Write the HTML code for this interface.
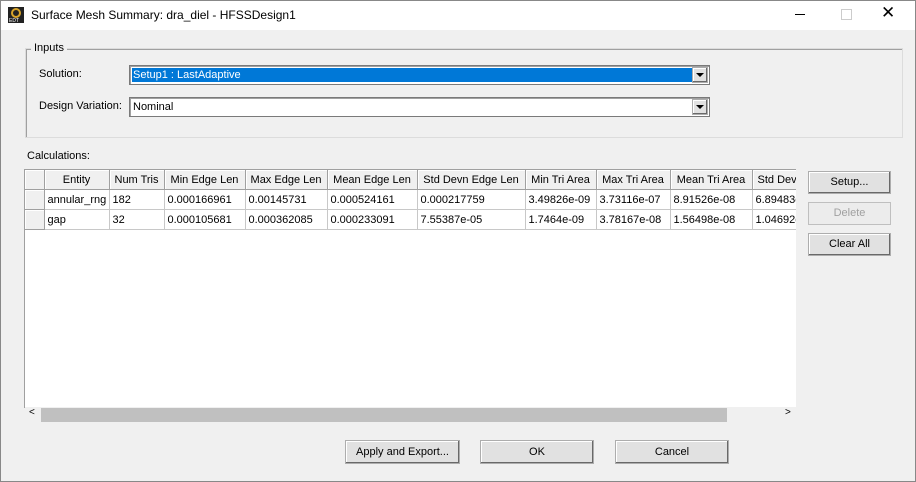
<!DOCTYPE html><html><head><style>
body{margin:0;width:916px;height:482px;background:#f0f0f0;font-family:"Liberation Sans",sans-serif;font-size:11px;color:#000;position:relative;overflow:hidden}
.a{position:absolute}
.win{left:0;top:0;width:914px;height:480px;border:1px solid #888}
.title{left:1px;top:1px;width:914px;height:29px;background:#fff}
.combo{background:#fff;border:1px solid #7a7a7a;box-shadow:inset 1px 1px 0 #a0a0a0}
.btn{background:#e1e1e1;border:1px solid #adadad;box-shadow:inset -1px -1px 0 #696969,inset 1px 1px 0 #fff;text-align:center;line-height:21px}
table{border-collapse:collapse;table-layout:fixed}
td{height:19px;border:1px solid #c8c8c8;padding:0 0 0 3px;white-space:nowrap;overflow:hidden;font-size:11px}
th{height:19px;font-weight:normal;background:#f0f0f0;border-right:1px solid #a0a0a0;border-bottom:1px solid #a0a0a0;box-shadow:inset 1px 1px 0 #fff;white-space:nowrap;overflow:hidden;padding:0;font-size:11px}
.arrow{width:0;height:0;border-left:4px solid transparent;border-right:4px solid transparent;border-top:4px solid #000}
</style></head><body>
<div class="a win"></div>
<div class="a title"></div>
<svg class="a" style="left:8px;top:7px" width="16" height="16"><rect width="16" height="16" fill="#222"/><circle cx="8" cy="6" r="4" fill="none" stroke="#d9a52b" stroke-width="2"/><text x="1" y="15" font-size="5" fill="#fff" font-family="Liberation Sans">EDT</text></svg>
<div class="a" style="left:31px;top:8px;font-size:12px">Surface Mesh Summary: dra_diel - HFSSDesign1</div>
<div class="a" style="left:795px;top:14px;width:10px;height:1px;background:#000"></div>
<div class="a" style="left:841px;top:9px;width:9px;height:9px;border:1px solid #ccc"></div>
<div class="a" style="left:881px;top:3px;font-size:17px">✕</div>
<div class="a" style="left:25px;top:48px;width:876px;height:88px;border:1px solid #dcdcdc;box-shadow:inset 1px 1px 0 #a0a0a0"></div>
<div class="a" style="left:31px;top:42px;background:#f0f0f0;padding:0 3px">Inputs</div>
<div class="a" style="left:39px;top:68px">Solution:</div>
<div class="a" style="left:39px;top:100px">Design Variation:</div>
<div class="a combo" style="left:129px;top:65px;width:579px;height:18px"><div class="a" style="left:2px;top:2px;width:559px;height:14px;background:#0078d7;color:#fff;line-height:14px;padding-left:1px">Setup1 : LastAdaptive</div><div class="a btn" style="right:1px;top:1px;width:14px;height:14px;line-height:14px"><div class="arrow" style="margin:5px auto"></div></div></div>
<div class="a combo" style="left:129px;top:97px;width:579px;height:18px"><div class="a" style="left:3px;top:3px">Nominal</div><div class="a btn" style="right:1px;top:1px;width:14px;height:14px;line-height:14px"><div class="arrow" style="margin:5px auto"></div></div></div>
<div class="a" style="left:27px;top:150px">Calculations:</div>
<div class="a" style="left:24px;top:169px;width:771px;height:238px;background:#fff;border-left:1px solid #a0a0a0;border-top:1px solid #a0a0a0;overflow:hidden">
<table style="width:830px"><colgroup><col style="width:19px"><col style="width:65px"><col style="width:55px"><col style="width:81px"><col style="width:82px"><col style="width:90px"><col style="width:108px"><col style="width:71px"><col style="width:74px"><col style="width:82px"><col style="width:103px"></colgroup>
<tr><th></th><th>Entity</th><th>Num Tris</th><th>Min Edge Len</th><th>Max Edge Len</th><th>Mean Edge Len</th><th>Std Devn Edge Len</th><th>Min Tri Area</th><th>Max Tri Area</th><th>Mean Tri Area</th><th style="text-align:left;padding-left:5px">Std Devn Tri Area</th></tr>
<tr><th></th><td>annular_rng</td><td>182</td><td>0.000166961</td><td>0.00145731</td><td>0.000524161</td><td>0.000217759</td><td>3.49826e-09</td><td>3.73116e-07</td><td>8.91526e-08</td><td>6.89483e-08</td></tr>
<tr><th></th><td>gap</td><td>32</td><td>0.000105681</td><td>0.000362085</td><td>0.000233091</td><td>7.55387e-05</td><td>1.7464e-09</td><td>3.78167e-08</td><td>1.56498e-08</td><td>1.04692e-08</td></tr>
</table></div>
<div class="a" style="left:25px;top:407px;width:771px;height:16px;background:#f0f0f0"></div>
<div class="a" style="left:41px;top:408px;width:686px;height:14px;background:#c0c0c0"></div>
<div class="a" style="left:29px;top:407px;font-size:10px">&lt;</div>
<div class="a" style="left:785px;top:407px;font-size:10px">&gt;</div>
<div class="a btn" style="left:808px;top:171px;width:81px;height:21px">Setup...</div>
<div class="a btn" style="left:808px;top:202px;width:81px;height:21px;color:#a0a0a0;background:#ececec;box-shadow:none;border-color:#bfbfbf">Delete</div>
<div class="a btn" style="left:808px;top:233px;width:81px;height:21px">Clear All</div>
<div class="a btn" style="left:345px;top:440px;width:113px;height:22px;line-height:22px">Apply and Export...</div>
<div class="a btn" style="left:480px;top:440px;width:112px;height:22px;line-height:22px">OK</div>
<div class="a btn" style="left:615px;top:440px;width:112px;height:22px;line-height:22px">Cancel</div>
</body></html>
